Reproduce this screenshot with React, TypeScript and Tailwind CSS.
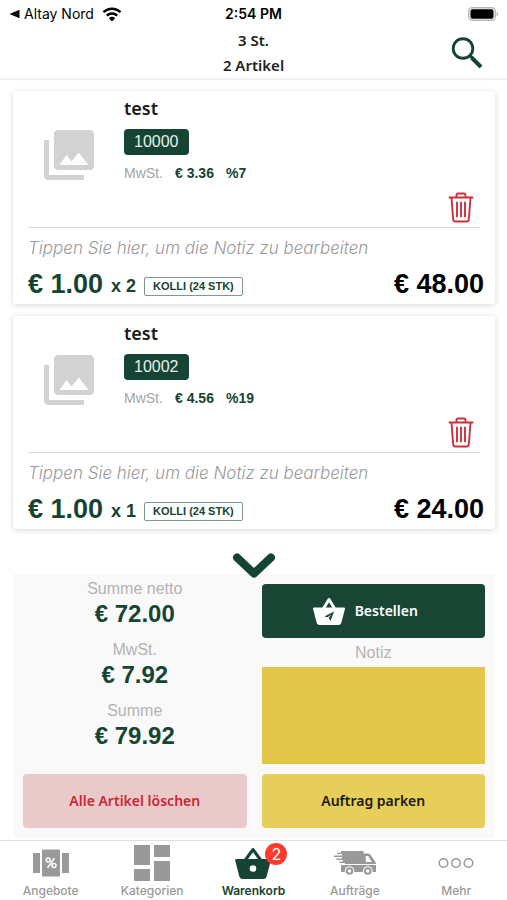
import React from "react";

type Item = {
  id: string;
  name: string;
  tax: string;
  rate: string;
  unit: string;
  qty: number;
  pack: string;
  total: string;
};

const items: Item[] = [
  { id: "10000", name: "test", tax: "€ 3.36", rate: "%7", unit: "€ 1.00", qty: 2, pack: "KOLLI (24 STK)", total: "€ 48.00" },
  { id: "10002", name: "test", tax: "€ 4.56", rate: "%19", unit: "€ 1.00", qty: 1, pack: "KOLLI (24 STK)", total: "€ 24.00" },
];

const sums = [
  { label: "Summe netto", value: "€ 72.00" },
  { label: "MwSt.", value: "€ 7.92" },
  { label: "Summe", value: "€ 79.92" },
];

function StatusBar() {
  return (
    <div className="grid h-7 grid-cols-3 items-center px-2 font-['Inter',sans-serif] text-sm text-black">
      <div className="flex items-center gap-1 whitespace-nowrap">
        <svg width="12" height="10" viewBox="0 0 12 10" aria-hidden="true">
          <path d="M1.5 5 11.5 .8v8.4z" />
        </svg>
        <span>Altay Nord</span>
        <svg className="ml-1" width="20" height="15" viewBox="0 0 20 15" aria-hidden="true">
          <g fill="none" stroke="#000" strokeWidth="2.5">
            <path d="M1.5 5.2a12.2 12.2 0 0 1 17 0" />
            <path d="M4.8 8.7a7.5 7.5 0 0 1 10.4 0" />
          </g>
          <path d="M10 14.5 6.9 11.2a4.5 4.5 0 0 1 6.2 0z" />
        </svg>
      </div>
      <div className="text-center font-semibold">2:54 PM</div>
      <div className="flex justify-end">
        <svg width="31" height="14" viewBox="0 0 31 14" aria-hidden="true">
          <rect x=".8" y=".8" width="26.4" height="12.4" rx="3.5" fill="#fff" stroke="#b5b5b5" strokeWidth="1.4" />
          <rect x="2.5" y="2.3" width="23" height="9.4" rx="2" />
          <path d="M28.6 4.6c2 .7 2 4.1 0 4.8z" fill="#b5b5b5" />
        </svg>
      </div>
    </div>
  );
}

function ItemCard({ item }: { item: Item }) {
  return (
    <article className="rounded-sm bg-white px-[15px] pt-1 pb-1 shadow-[0_1px_6px_rgba(0,0,0,0.16)]">
      <div className="flex h-[133px] border-b border-[#dcdcdc]">
        <div className="w-24 pt-[35px] pl-4">
          <svg width="50" height="50" viewBox="2 2 20 20" fill="#d2d2d2" aria-hidden="true">
            <path
              fillRule="evenodd"
              d="M20.4 2H7.6C6.7 2 6 2.7 6 3.6v12.8c0 .9.7 1.6 1.6 1.600h12.800c.9 0 1.600-.7 1.600-1.600V3.600c0-.9-.7-1.600-1.600-1.600zM8.200 16h11.600l-3.900-5-2.900 3.600-2-2.600zM2 6h2v14h14v2H3.600c-.9 0-1.600-.7-1.600-1.600z"
            />
          </svg>
        </div>
        <div className="flex-1">
          <h2 className="font-['Noto_Sans',sans-serif] text-lg leading-[26px] font-semibold text-[#191919]">{item.name}</h2>
          <span className="mt-2 flex h-[26px] w-fit items-center rounded bg-[#164433] px-2.5 text-base text-[#e8efec]">
            {item.id}
          </span>
          <p className="mt-2 flex h-5 items-center text-sm font-bold text-[#164433]">
            <span className="w-[51px] font-normal text-[#a3a3a3]">MwSt.</span>
            <span className="w-[51px]">{item.tax}</span>
            <span>{item.rate}</span>
          </p>
        </div>
        <button type="button" aria-label="Artikel löschen" className="mr-1.5 self-end pb-1">
          <svg width="26" height="31" viewBox="0 0 26 31" fill="none" stroke="#cf2f3b" strokeWidth="1.900" strokeLinecap="round" strokeLinejoin="round" aria-hidden="true">
            <path d="M1.500 5.500h23M8.500 5V3.200c0-1 .6-1.700 1.600-1.700h5.800c1 0 1.600.7 1.600 1.700V5M3.500 6l1.700 21.500c.1 1.300.9 2 2.100 2h11.400c1.200 0 2-.7 2.100-2L22.500 6M9 10.500v14M13 10.500v14M17 10.500v14" />
          </svg>
        </button>
      </div>
      <input
        type="text"
        aria-label={"Notiz zu " + item.id}
        placeholder="Tippen Sie hier, um die Notiz zu bearbeiten"
        className="block h-10 w-full bg-transparent font-['Inter',sans-serif] text-[17px] text-[#444] italic outline-none placeholder:font-light placeholder:text-[#999]"
      />
      <div className="-mr-1 flex h-8 items-center font-bold text-[#164433]">
        <span className="text-[27px]">{item.unit}</span>
        <span className="ml-2 w-[33px] pt-1 text-lg">x {item.qty}</span>
        <span className="mt-1 flex h-[19px] items-center rounded-xs border border-[#7d988e] px-2 text-[11px]">{item.pack}</span>
        <span className="ml-auto text-[27px] text-black">{item.total}</span>
      </div>
    </article>
  );
}

function PercentCards() {
  return (
    <svg width="36" height="28" viewBox="0 0 36 28" aria-hidden="true">
      <path fill="#999" d="M0 4h7v20H0zM9 .500h18v27H9zM29 4h7v20h-7z" />
      <g fill="none" stroke="#fff" strokeWidth="1.500">
        <circle cx="15.200" cy="11" r="2" />
        <circle cx="21" cy="16.500" r="2" />
        <path d="m21.500 9-7 10" />
      </g>
    </svg>
  );
}

function Tiles() {
  return (
    <svg width="36" height="36" viewBox="0 0 36 36" fill="#999" aria-hidden="true">
      <path d="M0 0h16v20H0zM20 0h16v12H20zM0 24h16v12H0zM20 16h16v20H20z" />
    </svg>
  );
}

function Basket() {
  return (
    <svg width="36" height="32" viewBox="0 0 36 32" aria-hidden="true">
      <path d="M10 13.500 18 2.500l8 11" fill="none" stroke="#164433" strokeWidth="3" strokeLinejoin="round" />
      <path fill="#164433" d="M1.500 12h33c1 0 1.500.7 1.300 1.600l-4 15.400c-.5 1.800-1.600 3-3.400 3H7.600c-1.800 0-2.900-1.200-3.400-3L.2 13.600C0 12.700.5 12 1.500 12z" />
      <circle cx="18" cy="21.500" r="3.300" fill="#fff" />
    </svg>
  );
}

function Van() {
  return (
    <svg width="42" height="26" viewBox="0 0 42 26" aria-hidden="true">
      <path fill="#999" d="M7 1h22.500v2.500H34c1.200 0 2 .5 2.700 1.500l4 6c.9 1 1.300 2 1.300 3.500V22H7v-7.500h4V13H5.500v-1.500H9V10H2.500V8.500H8V7H0V5.500h8V4H3V2.800h4z" />
      <path fill="#fff" d="M31.800 6h2.400l3.600 6h-6zM7 14h35v1H7z" />
      <circle cx="15.500" cy="21" r="4.800" fill="#fff" />
      <circle cx="33.800" cy="21" r="4.800" fill="#fff" />
      <circle cx="15.500" cy="21" r="2.800" fill="#fff" stroke="#999" strokeWidth="2" />
      <circle cx="33.800" cy="21" r="2.800" fill="#fff" stroke="#999" strokeWidth="2" />
    </svg>
  );
}

function Dots() {
  return (
    <svg width="36" height="12" viewBox="0 0 36 12" fill="none" stroke="#999" strokeWidth="1.500" aria-hidden="true">
      <circle cx="5.500" cy="6" r="4.300" />
      <circle cx="18" cy="6" r="4.300" />
      <circle cx="30.500" cy="6" r="4.300" />
    </svg>
  );
}

const tabs = [
  { label: "Angebote", Icon: PercentCards },
  { label: "Kategorien", Icon: Tiles },
  { label: "Warenkorb", Icon: Basket, active: true, badge: 2 },
  { label: "Aufträge", Icon: Van },
  { label: "Mehr", Icon: Dots },
];

function TabBar() {
  return (
    <nav className="grid grid-cols-5 border-t border-[#dedede] bg-white pt-1 font-['Inter',sans-serif]">
      {tabs.map(({ label, Icon, active, badge }) => (
        <a key={label} href="#" aria-current={active ? "page" : undefined} className="flex flex-col items-center">
          <span className="relative flex h-9 items-center">
            <Icon />
            {badge && (
              <span className="absolute -top-0.5 left-[30px] flex size-[22px] items-center justify-center rounded-full bg-[#ff3b30] text-base text-white">
                {badge}
              </span>
            )}
          </span>
          <span className={active ? "mt-px text-xs leading-[18px] font-semibold text-[#164433]" : "mt-px text-xs leading-[18px] font-medium text-[#999]"}>
            {label}
          </span>
        </a>
      ))}
    </nav>
  );
}

export default function App() {
  return (
    <div className="flex min-h-screen flex-col bg-white font-['Liberation_Sans',Arial,sans-serif]">
      <header className="border-b-2 border-[#f0f0f0]">
        <StatusBar />
        <div className="grid grid-cols-3 items-center pr-6 pl-6 font-['Noto_Sans',sans-serif]">
          <div className="col-start-2 text-center text-[15px] leading-[25px] font-semibold text-[#222]">
            <p>3 St.</p>
            <p>2 Artikel</p>
          </div>
          <button type="button" aria-label="Suchen" className="justify-self-end">
            <svg width="32" height="32" viewBox="0 0 32 32" fill="none" stroke="#164433" aria-hidden="true">
              <circle cx="12" cy="11.500" r="9.800" strokeWidth="2.900" />
              <path d="m18.500 18 3 3" strokeWidth="3" />
              <path d="m20.500 20.500 9.500 9.500" strokeWidth="4" />
            </svg>
          </button>
        </div>
      </header>

      <main className="flex flex-1 flex-col pt-[11px] pr-3 pl-[13px]">
        <div className="flex flex-col gap-3">
          {items.map((item) => (
            <ItemCard key={item.id} item={item} />
          ))}
        </div>

        <button type="button" aria-label="Zusammenfassung einklappen" className="relative mt-[23px] -mb-1.5 self-center">
          <svg width="44" height="28" viewBox="0 0 44 28" fill="none" stroke="#164433" strokeWidth="8" strokeLinecap="round" strokeLinejoin="round" aria-hidden="true">
            <path d="m5 5.500 17 16 17-16" />
          </svg>
        </button>

        <section className="grid grid-cols-2 gap-x-[15px] bg-[#f9f9f9] px-2.5 pt-2.5 pb-2.5">
          <dl className="-mt-1 flex flex-col text-center">
            {sums.map((s) => (
              <div key={s.label} className="h-[61px]">
                <dt className="text-base leading-[18px] text-[#b3b3b3]">{s.label}</dt>
                <dd className="text-2xl leading-8 font-bold text-[#164433]">{s.value}</dd>
              </div>
            ))}
          </dl>
          <div className="flex flex-col">
            <button type="button" className="flex h-[54px] items-center justify-center gap-2.5 rounded bg-[#184534] pr-4 font-['Noto_Sans',sans-serif] text-sm font-semibold text-white">
              <svg width="32" height="28" viewBox="0 0 32 28" aria-hidden="true">
                <path d="M10.500 11.500 16 2.500l5.500 9" fill="none" stroke="#fff" strokeWidth="3" strokeLinejoin="round" />
                <path fill="#fff" d="M1 10.500h30c.8 0 1.200.6 1 1.300l-3.600 13.700c-.4 1.600-1.300 2.500-3 2.500H6.600c-1.700 0-2.600-.9-3-2.500L0 11.800c-.2-.7.2-1.300 1-1.300z" />
                <path fill="#184534" d="m21 14.500-3.500 9.500-1.800-3.200 2.500-3.300-3.800 2.800-3-.9z" />
              </svg>
              Bestellen
            </button>
            <label htmlFor="notiz" className="pt-1 pb-1 text-center text-base leading-[21px] text-[#b3b3b3]">
              Notiz
            </label>
            <textarea id="notiz" className="block h-[97px] w-full resize-none bg-[#e1c648] p-2 outline-none" />
          </div>
          <button type="button" className="mt-2.5 h-[54px] rounded bg-[#eac9ca] font-['Noto_Sans',sans-serif] text-sm font-semibold text-[#cb2733]">
            Alle Artikel löschen
          </button>
          <button type="button" className="mt-2.5 h-[54px] rounded bg-[#e7ce5a] font-['Noto_Sans',sans-serif] text-sm font-semibold text-[#1c1a10]">
            Auftrag parken
          </button>
        </section>
      </main>

      <TabBar />
    </div>
  );
}
